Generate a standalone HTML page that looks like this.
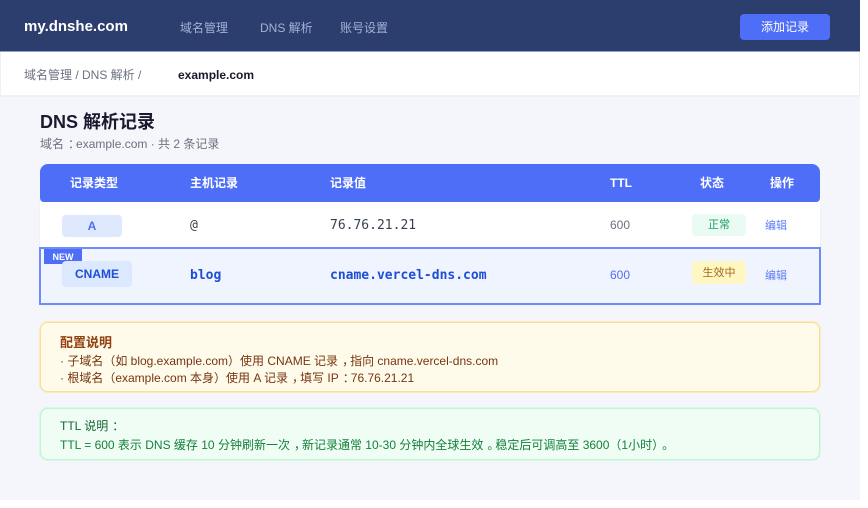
<!DOCTYPE html>
<html lang="zh-CN"><head><meta charset="utf-8"><style>
*{box-sizing:border-box;margin:0;padding:0}
html,body{width:868px;height:508px;background:#fff;overflow:hidden}
body{position:relative;font-family:"Liberation Sans","Droid Sans Fallback","WenQuanYi Micro Hei","WenQuanYi Zen Hei","Noto Sans CJK SC",sans-serif}
.a{position:absolute;white-space:nowrap}
.box{position:absolute}
.m{font-family:"DejaVu Sans Mono",monospace}
.th{color:#fff;font-size:12px;font-weight:700;top:175px;line-height:16px}
.p{position:relative;left:4px}
</style></head><body>
<div class="box" style="left:0;top:0;width:860px;height:500px;background:#f4f6fb"></div>
<div class="box" style="left:0;top:0;width:860px;height:52px;background:#2c3e6e;border-bottom:1px solid #8f9dc0"></div>
<div class="a" style="left:24px;top:18px;font-size:15px;font-weight:700;color:#fff;line-height:18px">my.dnshe.com</div>
<div class="a" style="left:180px;top:20px;font-size:12px;color:#a3b1d6;line-height:16px">域名管理</div>
<div class="a" style="left:260px;top:20px;font-size:12px;color:#a3b1d6;line-height:16px">DNS 解析</div>
<div class="a" style="left:340px;top:20px;font-size:12px;color:#a3b1d6;line-height:16px">账号设置</div>
<div class="a" style="left:740px;top:14px;width:90px;height:26px;background:#4f6ef7;border-radius:4px;color:#fff;font-size:12px;line-height:27px;text-align:center">添加记录</div>

<div class="box" style="left:0;top:52px;width:860px;height:45px;background:#fff;border:1px solid #eef0f5;border-top:0;border-bottom-width:2px"></div>
<div class="a" style="left:24px;top:67px;font-size:12px;color:#6b7280;line-height:16px">域名管理 / DNS 解析 /</div>
<div class="a" style="left:178px;top:67px;font-size:12px;font-weight:700;color:#1a1a2e;line-height:16px">example.com</div>

<div class="a" style="left:40px;top:111px;font-size:18px;font-weight:700;color:#1a1a2e;line-height:22px">DNS 解析记录</div>
<div class="a" style="left:40px;top:136px;font-size:12px;color:#6b7280;line-height:16px">域名<span class="p">：</span>example.com · 共 2 条记录</div>

<div class="box" style="left:40px;top:202px;width:780px;height:103px;background:#fff;box-shadow:0 0 2px #e8ebf2"></div>
<div class="box" style="left:40px;top:164px;width:780px;height:38px;background:#4f6ef7;border-radius:8px 8px 4px 4px"></div>
<div class="a th" style="left:70px">记录类型</div>
<div class="a th" style="left:190px">主机记录</div>
<div class="a th" style="left:330px">记录值</div>
<div class="a th" style="left:610px">TTL</div>
<div class="a th" style="left:700px">状态</div>
<div class="a th" style="left:770px">操作</div>

<div class="a" style="left:62px;top:215px;width:60px;height:22px;background:#dfe9fd;border-radius:4px;color:#4f6ef7;font-size:12px;font-weight:700;line-height:23px;text-align:center">A</div>
<div class="a m" style="left:190px;top:218px;font-size:13px;color:#374151;line-height:16px">@</div>
<div class="a m" style="left:330px;top:218px;font-size:13px;color:#374151;line-height:16px">76.76.21.21</div>
<div class="a" style="left:610px;top:217px;font-size:12px;color:#6b7280;line-height:16px">600</div>
<div class="a" style="left:692px;top:214px;width:54px;height:22px;background:#e9fbf2;border-radius:4px;color:#1f9d6b;font-size:11px;line-height:23px;text-align:center">正常</div>
<div class="a" style="left:765px;top:219px;font-size:11px;color:#5f7cf8;line-height:15px">编辑</div>

<div class="box" style="left:39px;top:247px;width:782px;height:58px;background:#eff4fe;border:2px solid #6f8bfa"></div>
<div class="a" style="left:44px;top:249px;width:38px;height:15px;background:#4f6ef7;color:#fff;font-size:9px;font-weight:700;line-height:17px;text-align:center">NEW</div>
<div class="a" style="left:62px;top:261px;width:70px;height:26px;background:#dbe8fd;border-radius:4px;color:#1d4ed8;font-size:12px;font-weight:700;line-height:26px;text-align:center">CNAME</div>
<div class="a m" style="left:190px;top:268px;font-size:13px;font-weight:700;color:#1d4ed8;line-height:16px">blog</div>
<div class="a m" style="left:330px;top:268px;font-size:13px;font-weight:700;color:#1d4ed8;line-height:16px">cname.vercel-dns.com</div>
<div class="a" style="left:610px;top:267px;font-size:12px;color:#4f6ef7;line-height:16px">600</div>
<div class="a" style="left:692px;top:261px;width:54px;height:23px;background:#fef6c3;border-radius:4px;color:#a16a1a;font-size:11px;line-height:24px;text-align:center">生效中</div>
<div class="a" style="left:765px;top:269px;font-size:11px;color:#5f7cf8;line-height:15px">编辑</div>

<div class="box" style="left:40px;top:322px;width:780px;height:70px;background:#fffbeb;border:1px solid #fde08f;border-radius:8px;box-shadow:0 0 0 1px rgba(253,224,143,.5)"></div>
<div class="a" style="left:60px;top:334px;font-size:13px;font-weight:700;color:#92400e;line-height:17px">配置说明</div>
<div class="a" style="left:60px;top:353px;font-size:12px;color:#78350f;line-height:16px">· 子域名（如 blog.example.com）使用 CNAME 记录<span class="p">，</span>指向 cname.vercel-dns.com</div>
<div class="a" style="left:60px;top:370px;font-size:12px;color:#78350f;line-height:16px">· 根域名（example.com 本身）使用 A 记录<span class="p">，</span>填写 IP<span class="p">：</span>76.76.21.21</div>

<div class="box" style="left:40px;top:408px;width:780px;height:52px;background:#f0fdf4;border:1px solid #bbf7d0;border-radius:8px;box-shadow:0 0 0 1px rgba(187,247,208,.5)"></div>
<div class="a" style="left:60px;top:418px;font-size:12px;color:#166534;line-height:16px">TTL 说明<span class="p">：</span></div>
<div class="a" style="left:60px;top:437px;font-size:12px;color:#15803d;line-height:16px">TTL = 600 表示 DNS 缓存 10 分钟刷新一次<span class="p">，</span>新记录通常 10-30 分钟内全球生效<span class="p">。</span>稳定后可调高至 3600（1小时）<span class="p">。</span></div>
</body></html>
